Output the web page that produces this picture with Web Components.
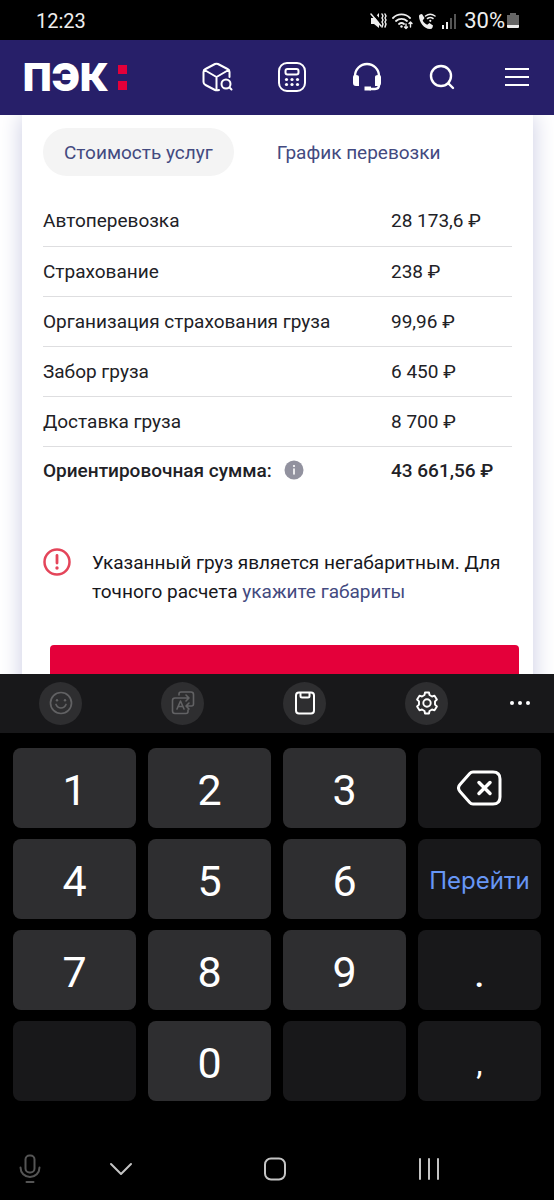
<!DOCTYPE html>
<html lang="ru">
<head>
<meta charset="utf-8">
<meta name="viewport" content="width=device-width, initial-scale=1">
<title>ПЭК: стоимость услуг</title>
<style>
html, body { margin: 0; height: 100%; background: #000; }
body { font-family: Roboto, "Noto Sans", sans-serif; }
notice-box a { color: #434a80; text-decoration: none; }
</style>
</head>
<body>
<phone-screen>
  <status-bar slot="top" time="12:23" battery="30%"></status-bar>
  <site-header slot="top"></site-header>
  <price-card>
    <price-table></price-table>
    <notice-box slot="notice">Указанный груз является негабаритным. Для точного расчета <a href="#dimensions">укажите габариты</a></notice-box>
    <primary-button slot="action">Оформить заявку</primary-button>
  </price-card>
  <keyboard-toolbar slot="bottom"></keyboard-toolbar>
  <number-pad slot="bottom"></number-pad>
  <system-nav slot="bottom"></system-nav>
</phone-screen>
<script>
const base = `<style>
:host, * { box-sizing: border-box; }
button { font: inherit; color: inherit; border: 0; background: none; padding: 0; margin: 0; }
svg { display: block; }
svg:not([fill]) { fill: none; }
svg:not([stroke]) { stroke: currentColor; }
svg:not([stroke-linecap]) { stroke-linecap: round; stroke-linejoin: round; }
</style>`;

function element(name, html, setup) {
  customElements.define(name, class extends HTMLElement {
    constructor() {
      super();
      this.attachShadow({ mode: 'open' }).innerHTML = base + html;
    }
    connectedCallback() { if (setup) setup(this, this.shadowRoot); }
  });
}

element('phone-screen', `
<style>
:host { display: flex; flex-direction: column; height: 100vh; overflow: hidden; }
main { flex: 1; min-height: 0; overflow: hidden; background: #fff; }
</style>
<slot name="top"></slot><main><slot></slot></main><slot name="bottom"></slot>`);

element('status-bar', `
<style>
:host { display: flex; align-items: center; justify-content: space-between; height: 40px; padding: 2px 35px 0 36px; background: #000; color: #eee; font-size: 20px; line-height: 24px; }
div { display: flex; align-items: center; gap: 5px; }
.charge { display: flex; align-items: center; gap: 2px; padding-left: 2px; font-size: 22px; }
</style>
<span id="time"></span>
<div>
<svg width="17" height="18" viewBox="0 0 17 18" aria-hidden="true"><path fill="currentColor" stroke="none" d="M1 6h3l5-5v15l-5-4H1z"/><path stroke="#000" stroke-width="3" d="M3 1l11 13"/><path stroke-width="1.500" d="M1 2l10 12"/><path stroke-width="1.500" d="M12 2l1 2-1 2 1 2-1 2 1 2-1 3M15 2l1 2-1 2 1 2-1 2 1 2-1 3"/></svg>
<svg width="21" height="18" viewBox="0 0 21 18" stroke-width="1.800" aria-hidden="true"><path d="M1 6a12 12 0 0 1 17 0M4 9a8 8 0 0 1 11 0M7 12a4 4 0 0 1 5 0"/><circle cx="9.500" cy="14.500" r="1.200" fill="currentColor" stroke="none"/><path stroke-width="1.400" d="M14 12v4.500m-1.500-1.500l1.500 1.500 1.500-1.500M18.500 15v-5M17 11.500l1.500-1.500 1.500 1.500"/></svg>
<svg width="18" height="18" viewBox="0 0 18 18" aria-hidden="true"><path fill="currentColor" stroke="none" d="M1 4q0-1 1-1.500l2-.5 2.500 4-1.800 2.500c1 2 2.500 3.500 4.500 4.300L11.500 11l3.500 2.500-.5 2q-.5 1.500-2.500 1.500C6 17 1 10 1 4z"/><path stroke-width="1.500" d="M7.500 4a8 8 0 0 1 9.500 0M9.500 6.500a5 5 0 0 1 5.500 0"/><circle cx="12.300" cy="8.800" r="1.100" fill="currentColor" stroke="none"/></svg>
<svg width="16" height="16" viewBox="0 0 16 16" stroke-width="2" stroke-linecap="butt" aria-hidden="true"><path d="M2 12v4M6 9v7"/><path stroke="#555" d="M10 5v11M14 1v15"/></svg>
<span class="charge"><span id="battery"></span>
<svg width="12" height="16" viewBox="0 0 12 16" stroke="none" aria-hidden="true"><path fill="#666" d="M3 0h6v2h3v10H0V2h3z"/><path fill="#eee" d="M0 12h12v2q0 1-1 1H1q-1 0-1-1z"/></svg></span>
</div>`, (host, root) => {
  root.getElementById('time').textContent = host.getAttribute('time');
  root.getElementById('battery').textContent = host.getAttribute('battery');
});

element('site-header', `
<style>
:host { display: flex; align-items: center; justify-content: space-between; height: 75px; padding: 0 21px 1px 23px; background: #271f69; color: #fff; }
.logo { display: flex; align-items: center; gap: 9px; color: #fff; text-decoration: none; font: 900 38px/36px Inter, sans-serif; }
.dots { display: grid; gap: 7px; }
.dots i { width: 9px; height: 9px; background: #e4003a; }
nav { display: flex; gap: 43px; }
button { width: 32px; height: 32px; display: grid; place-items: center; }
</style>
<a class="logo" href="#home"><span>ПЭК</span><span class="dots"><i></i><i></i></span></a>
<nav aria-label="Меню">
<button aria-label="Отследить груз"><svg width="32" height="32" viewBox="0 0 32 32" stroke-width="2"><path d="M28.500 16V11q0-2-2-3L17 3q-1.500-.7-3 0L4.500 8q-2 1-2 3v10q0 2 2 3l9.500 5q1.500.7 4 0M3.500 9l12 7L27.500 9M15.500 16v13"/><circle cx="25" cy="23" r="4.500"/><path d="M28.500 26.500l2 2"/></svg></button>
<button aria-label="Калькулятор"><svg width="28" height="30" viewBox="0 0 28 30" stroke-width="2"><rect x="1" y="1" width="26" height="28" rx="8"/><rect x="7.500" y="7" width="13" height="5.500" rx="2"/><g fill="currentColor" stroke="none"><circle cx="8.500" cy="17.500" r="1.600"/><circle cx="14" cy="17.500" r="1.600"/><circle cx="19.500" cy="17.500" r="1.600"/><circle cx="8.500" cy="22.500" r="1.600"/><circle cx="14" cy="22.500" r="1.600"/><circle cx="19.500" cy="22.500" r="1.600"/></g></svg></button>
<button aria-label="Поддержка"><svg width="28" height="30" viewBox="0 0 28 30" stroke-width="2.400"><path d="M2 16v-2a12 12 0 0 1 24 0v9q0 4-4 4h-5"/><path fill="currentColor" stroke="none" d="M0 15q0-2 2-2h1q3 0 3 2v9H3q-3 0-3-3zM22 15q0-2 3-2h1q2 0 2 2v6q0 3-3 3h-3zM11.500 24.500H18v4h-6.500z"/></svg></button>
<button aria-label="Поиск"><svg width="26" height="26" viewBox="0 0 26 26" stroke-width="2.400"><circle cx="12" cy="12" r="10"/><path d="M19.500 19.500l4.500 4.500"/></svg></button>
<button aria-label="Открыть меню"><svg width="24" height="20" viewBox="0 0 24 20" stroke-width="2" stroke-linecap="butt"><path d="M0 2h24M0 10h24M0 18h24"/></svg></button>
</nav>`);

element('price-card', `
<style>
:host { display: block; margin: 0 21px 0 22px; padding: 13px 21px 21px; background: #fff; box-shadow: 0 0 22px #c9cbe2; color: #212126; font-size: 19px; line-height: 29px; }
.tabs { display: flex; gap: 22px; margin-bottom: 20px; }
.tabs button { height: 48px; padding: 0 21px; border-radius: 24px; color: #434a80; white-space: nowrap; }
.tabs [aria-selected=true] { background: #f4f4f4; }
</style>
<div class="tabs" role="tablist"><button role="tab" aria-selected="true">Стоимость услуг</button><button role="tab" aria-selected="false">График перевозки</button></div>
<slot></slot><slot name="notice"></slot><slot name="action"></slot>`);

element('price-table', `
<style>
:host { display: block; }
table { width: 100%; border-collapse: collapse; table-layout: fixed; }
th, td { height: 50px; padding: 0; border-bottom: 1px solid #dedee0; text-align: left; font-weight: 400; white-space: nowrap; }
td { width: 121px; }
tfoot th, tfoot td { height: 48px; border: 0; font-weight: 500; }
.sum { display: flex; align-items: center; gap: 12px; }
</style>
<table><tbody></tbody><tfoot><tr><th scope="row"><span class="sum">Ориентировочная сумма:
<button aria-label="Подробнее о сумме"><svg width="20" height="20" viewBox="0 0 20 20"><circle cx="10" cy="10" r="9.500" fill="#92929f" stroke="none"/><path stroke="#fff" stroke-width="1.600" d="M10 9v5"/><circle cx="10" cy="6" r="1.100" fill="#fff" stroke="none"/></svg></button></span></th><td>43 661,56 ₽</td></tr></tfoot></table>`, (host, root) => {
  const rows = [['Автоперевозка', '28 173,6 ₽'], ['Страхование', '238 ₽'], ['Организация страхования груза', '99,96 ₽'], ['Забор груза', '6 450 ₽'], ['Доставка груза', '8 700 ₽']];
  root.querySelector('tbody').innerHTML = rows.map(([name, price]) => `<tr><th scope="row">${name}</th><td>${price}</td></tr>`).join('');
});

element('notice-box', `
<style>
:host { display: flex; gap: 21px; margin-top: 54px; color: #17171c; }
svg { flex: none; }
p { margin: 0; }
</style>
<svg width="28" height="28" viewBox="0 0 28 28" stroke="#e4455a" stroke-width="2.500" aria-hidden="true"><circle cx="14" cy="14" r="12.500"/><path d="M14 7.500v7.500" stroke-width="2.800"/><circle cx="14" cy="20" r="1.700" fill="#e4455a" stroke="none"/></svg>
<p><slot></slot></p>`);

element('primary-button', `
<style>
:host { display: block; margin: 39px -7px 0 7px; }
button { width: 100%; height: 72px; border-radius: 4px; background: #e4003a; color: #fff; font-weight: 500; }
</style>
<button><slot></slot></button>`);

element('keyboard-toolbar', `
<style>
:host { display: flex; align-items: center; justify-content: space-between; height: 59px; padding: 0 23px 1px 39px; background: #18181a; color: #fff; }
.tools { display: flex; gap: 79px; }
button { width: 43px; height: 43px; border-radius: 50%; background: #2e2e30; display: grid; place-items: center; }
button:disabled { color: #626264; }
button.more { width: 22px; background: none; }
</style>
<div class="tools">
<button disabled aria-label="Эмодзи"><svg width="24" height="24" viewBox="0 0 24 24" stroke-width="1.700"><circle cx="12" cy="12" r="10.500"/><path d="M7 13.500q1.500 3.500 5 3.500t5-3.500"/><g fill="currentColor" stroke="none"><circle cx="8" cy="9.300" r="1.200"/><circle cx="16" cy="9.300" r="1.200"/></g></svg></button>
<button disabled aria-label="Перевод"><svg width="24" height="24" viewBox="0 0 24 24" stroke-width="1.600"><path d="M8 4V3q0-2 2-2h10q2.500 0 2.500 2.500V13q0 2-2 2h-4M18 12l-3 3 3 3M17 19v1.500q0 2-2 2H4q-2.500 0-2.500-2.500V9.500Q1.500 7 4 7h14M15 4l3 3-3 3"/><path d="M6 18l3.500-8 3.500 8M7.200 15.500h4.600"/></svg></button>
<button aria-label="Буфер обмена"><svg width="22" height="24" viewBox="0 0 22 24" stroke-width="2"><rect x="2" y="1.500" width="18" height="21" rx="3"/><path d="M6.500 2v3q0 1.500 1.500 1.500h6q1.500 0 1.500-1.500V2"/></svg></button>
<button aria-label="Настройки"><svg width="24" height="24" viewBox="0 0 24 24" stroke-width="1.900"><path d="M9.500 4l.5-2.500h4l.5 2.500 2.500 1.500L19.500 4.700l2.400 3.800-1.900 1.900v3.200l1.900 1.900-2.400 3.800-2.500-.8-2.500 1.500-.5 2.500h-4L9.500 20 7 18.500l-2.500.8-2.400-3.800L4 13.600v-3.200L2.100 8.500l2.400-3.800L7 5.500z"/><circle cx="12" cy="12" r="3.700"/></svg></button>
</div>
<button class="more" aria-label="Ещё"><svg width="20" height="4" viewBox="0 0 20 4" stroke="none"><g fill="currentColor"><circle cx="2" cy="2" r="2"/><circle cx="10" cy="2" r="2"/><circle cx="18" cy="2" r="2"/></g></svg></button>`);

element('number-pad', `
<style>
:host { display: grid; grid-template-columns: repeat(4, 1fr); grid-auto-rows: 80px; gap: 11px 12px; padding: 15px 13px 37px; background: #000; color: #fff; }
button { border-radius: 8px; background: #2e2e30; font-size: 43px; line-height: 48px; display: grid; place-items: center; padding-top: 3px; }
button.side { background: #18181a; }
button.back { padding: 0; }
button.comma { font-size: 32px; }
button.go { color: #6796f5; font: 24px/30px Inter, sans-serif; }
</style>
<button>1</button><button>2</button><button>3</button>
<button class="side back" aria-label="Удалить"><svg width="46" height="36" viewBox="0 0 46 36" stroke-width="3"><path d="M16 2h20q7 0 7 7v18q0 7-7 7H16q-2 0-3.500-1.700L3 21.500q-3-3.500 0-7l9.500-10.800Q14 2 16 2z"/><path d="M22 12.500l11 11M33 12.500l-11 11" stroke-width="3.500"/></svg></button>
<button>4</button><button>5</button><button>6</button><button class="side go">Перейти</button>
<button>7</button><button>8</button><button>9</button><button class="side">.</button>
<button class="side" aria-label="Пустая клавиша" disabled></button><button>0</button><button class="side" aria-label="Пустая клавиша" disabled></button><button class="side comma">,</button>`);

element('system-nav', `
<style>
:host { display: grid; grid-template-columns: 11fr 22fr 34fr 22fr 11fr; align-items: center; height: 62px; padding-right: 4px; background: #000; color: #c4c4c4; }
button { display: grid; place-items: center; }
.mic { color: #555; }
</style>
<button class="mic" aria-label="Голосовой ввод"><svg width="22" height="30" viewBox="0 0 22 30" stroke-width="2"><rect x="6.500" y="1.500" width="9" height="17" rx="4"/><path d="M1.500 13.500a9.500 9.500 0 0 0 19 0M7.500 28h7"/></svg></button>
<button aria-label="Скрыть клавиатуру"><svg width="24" height="14" viewBox="0 0 24 14" stroke-width="2"><path d="M2 2l10 10L22 2"/></svg></button>
<button aria-label="Домой"><svg width="22" height="24" viewBox="0 0 22 24" stroke-width="2"><rect x="1" y="1.500" width="20" height="21" rx="6"/></svg></button>
<button aria-label="Недавние"><svg width="22" height="22" viewBox="0 0 22 22" stroke-width="2"><path d="M2 1v20M11 1v20M20 1v20"/></svg></button>`);
</script>
</body>
</html>
